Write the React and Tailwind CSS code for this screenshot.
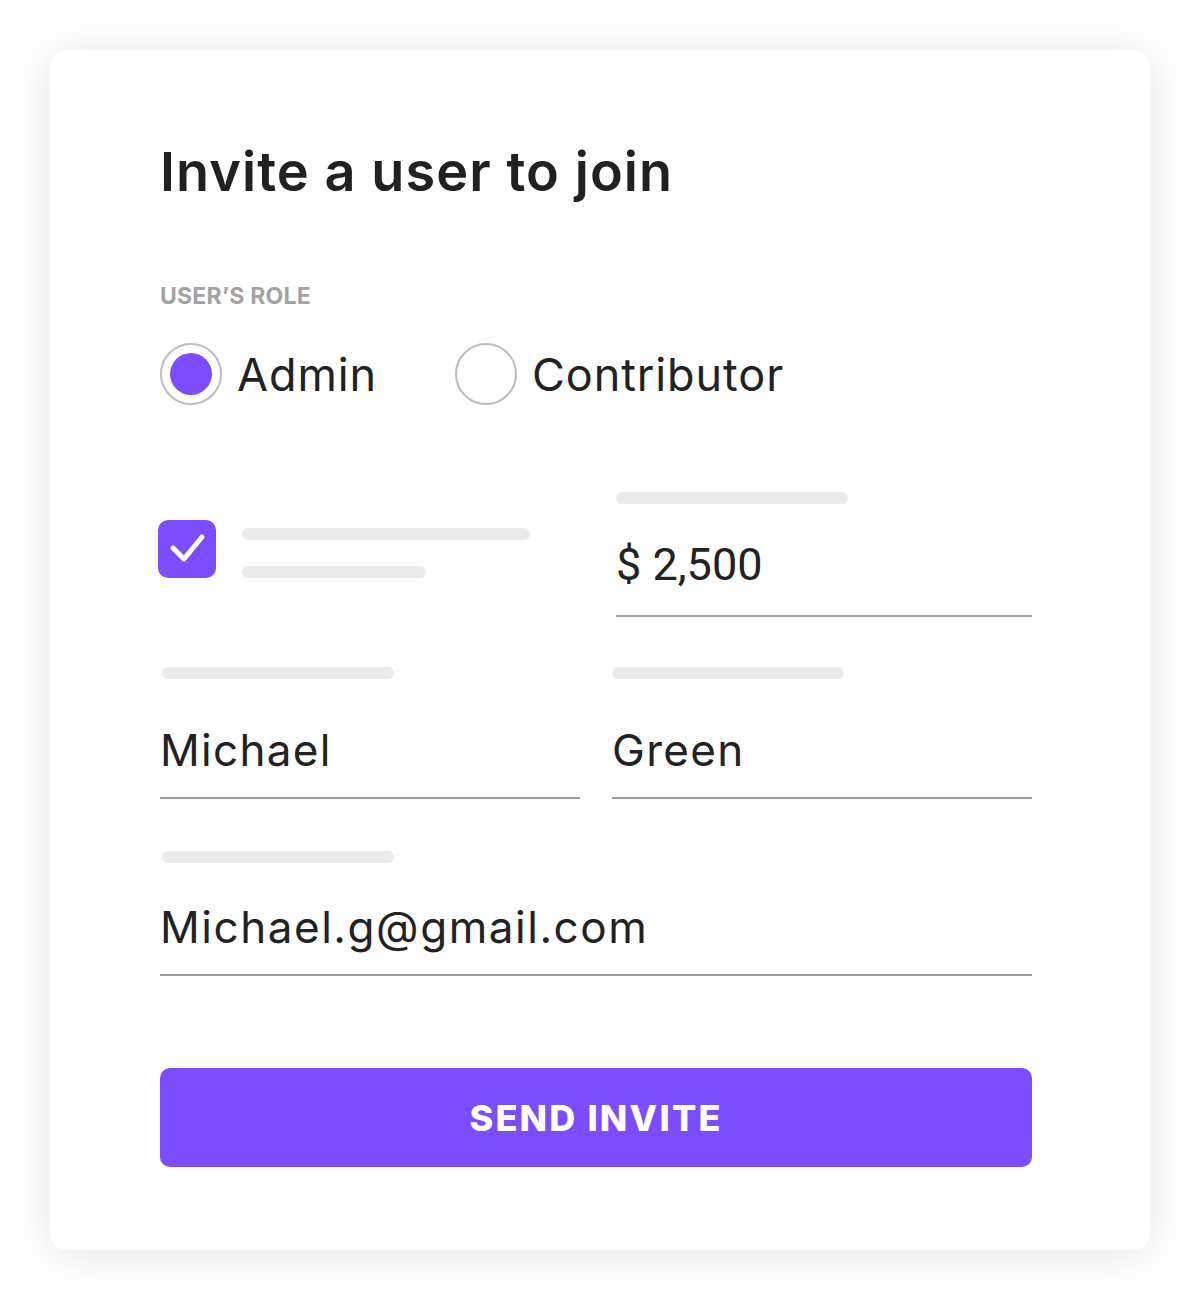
import React from 'react';

const font = { fontFamily: 'Inter, "Open Sans", sans-serif' };

const Skeleton = ({ className }) => (
  <div className={`h-3 rounded-full bg-[#ebebeb] ${className}`} />
);

const Field = ({ value, gap, className = '', textClass = '', line = 'pb-[25px]', bar = '' }) => (
  <div className={className}>
    <Skeleton className={`w-[232px] ${bar}`} />
    <div className={`${gap} ${line} border-b-2 border-[#9e9e9e] text-[44px] leading-none text-[#222] ${textClass}`}>
      {value}
    </div>
  </div>
);

const Radio = ({ checked, label }) => (
  <label className="flex items-center gap-[15px]">
    <span className="flex h-[62px] w-[62px] items-center justify-center rounded-full border-2 border-[#bdbdbd]">
      {checked && <span className="h-[42px] w-[42px] rounded-full bg-[#7c4dff]" />}
    </span>
    <span className="text-[45px] leading-none tracking-[0.02em] text-[#222]">{label}</span>
  </label>
);

const App = () => {
  return (
    <div className="min-h-[1300px] bg-white p-[50px]" style={font}>
      <div className="h-[1200px] w-[1100px] rounded-2xl bg-white pl-[110px] pt-[95px] shadow-[0_4px_50px_rgba(0,0,0,0.1)]">
        <div className="w-[872px]">
          <h1 className="text-[54px] font-semibold leading-none tracking-[0.02em] text-[#212121]">
            Invite a user to join
          </h1>

          <div className="mt-[86px] text-[23px] font-bold leading-none tracking-[0.01em] text-[#a3a3a3]">
            USER’S ROLE
          </div>

          {/* Role radios */}
          <div className="mt-[35px] flex items-center gap-[78px]">
            <Radio checked label="Admin" />
            <Radio label="Contributor" />
          </div>

          <div className="mt-[87px] grid grid-cols-2 gap-x-8">
            <div className="flex gap-[26px] pt-[28px]">
              <div className="-ml-[2px] flex h-[58px] w-[58px] items-center justify-center rounded-[10px] bg-[#7c4dff]">
                <svg width="58" height="58" viewBox="0 0 58 58" fill="none">
                  <path d="M15 28 L26 39 L44 17" stroke="#fff" strokeWidth="5" strokeLinecap="round" strokeLinejoin="round" />
                </svg>
              </div>
              <div className="flex flex-col gap-[26px] pt-2">
                <Skeleton className="w-[288px]" />
                <Skeleton className="w-[184px]" />
              </div>
            </div>
            <Field
              value="$ 2,500"
              gap="mt-[38px]"
              className="ml-[4px]"
              line="pb-[28px]"
              textClass="text-[45px] [font-family:Roboto,'Liberation_Sans',sans-serif]"
            />
          </div>

          <div className="mt-[50px] grid grid-cols-2 gap-x-8">
            <Field value="Michael" gap="mt-[49px]" bar="ml-[2px]" textClass="tracking-[0.03em]" />
            <Field value="Green" gap="mt-[49px]" textClass="tracking-[0.03em]" />
          </div>

          <Field
            value="Michael.g@gmail.com"
            gap="mt-[42px]"
            className="mt-[52px]"
            bar="ml-[2px]"
            textClass="tracking-[0.035em]"
          />

          <button className="mt-[92px] flex h-[99px] w-full items-center justify-center rounded-[10px] bg-[#7c4dff] text-[36px] font-extrabold tracking-[0.06em] text-white">
            SEND INVITE
          </button>
        </div>
      </div>
    </div>
  );
};

export default App;
